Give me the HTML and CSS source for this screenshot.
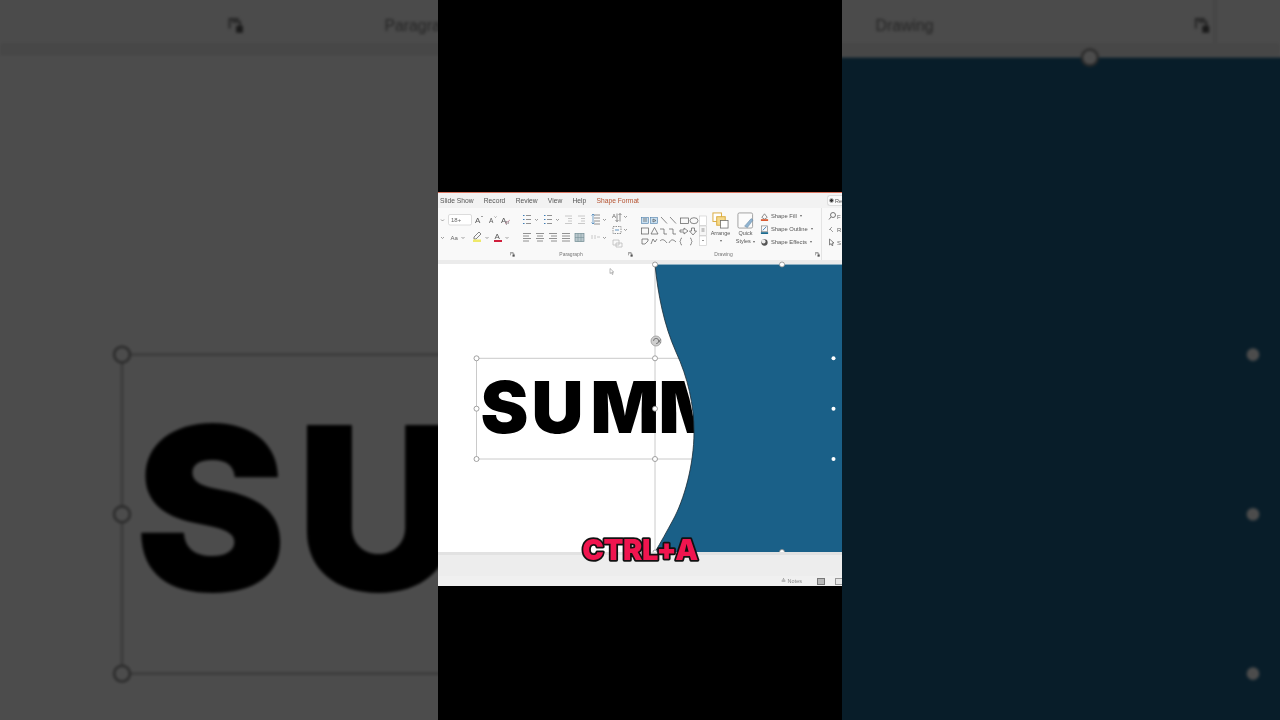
FILE: index.html
```html
<!DOCTYPE html>
<html lang="en">
<head>
<meta charset="utf-8">
<title>Shape Format</title>
<link rel="stylesheet" href="styles.css">
</head>
<body>
<svg class="defs" width="0" height="0">
  <defs>
    <symbol id="launcher" viewBox="0 0 6 6">
      <path d="M.5 4V.5H4M1.5 1.5h3v3" fill="none" stroke="#777" stroke-width=".8"/>
      <path d="M3 3h2.6v2.6H3z" fill="#555"/>
    </symbol>
    <symbol id="canvas-art" viewBox="438 264 404 288" overflow="visible">
      <g class="guides">
        <path d="M476.500 358.300H700M476.500 459H700M476.500 358.300V459M655 264V552"/>
      </g>
      <text class="big-text" x="480.500 531.500 590.500 658.500" y="433">SUMM</text>
      <path class="blue-shape" d="M655 264.500C658 295 664 325 676 352C688 378 694 405 694 432C694 465 684 500 673 520C667 531 661 542 655 552H870V264.500Z"/>
      <path class="shape-edge" d="M655 264.500C658 295 664 325 676 352C688 378 694 405 694 432C694 465 684 500 673 520C667 531 661 542 655 552"/>
      <g class="handle">
        <circle cx="476.500" cy="358.300" r="2.500"/><circle cx="655" cy="358.300" r="2.500"/>
        <circle cx="476.500" cy="408.700" r="2.500"/><circle cx="655" cy="408.700" r="2.500"/>
        <circle cx="476.500" cy="459" r="2.500"/><circle cx="655" cy="459" r="2.500"/>
        <circle cx="655" cy="264.500" r="2.500"/><circle cx="782" cy="264.500" r="2.500"/>
        <circle cx="655" cy="552" r="2"/><circle cx="782" cy="552" r="2.500"/>
      </g>
      <g class="dot">
        <circle cx="833.500" cy="358.300" r="2"/><circle cx="833.500" cy="408.700" r="2"/><circle cx="833.500" cy="459" r="2"/>
      </g>
      <g class="rotate">
        <circle cx="656" cy="341" r="5"/>
        <path d="M653.500 341a2.600 2.600 0 1 1 2.600 2.600M659 341l2-1.500M659 341l1.500 1.800"/>
      </g>
      <path class="cursor" d="M610 268.500v5l1.300-1 1 2 .8-.4-1-2h1.700z"/>
    </symbol>
  </defs>
</svg>

<div class="backdrop">
  <div class="frame frame-zoomed">
    <div class="slide">
      <div class="tabs"></div>
      <div class="ribbon">
        <div class="group group-font"><div class="group-body"></div><div class="group-foot"><svg class="launch"><use href="#launcher"/></svg></div></div>
        <div class="group group-para"><div class="group-body"></div><div class="group-foot"><span>Paragraph</span><svg class="launch"><use href="#launcher"/></svg></div></div>
        <div class="group group-draw"><div class="group-body"></div><div class="group-foot"><span>Drawing</span><svg class="launch"><use href="#launcher"/></svg></div></div>
        <div class="group group-edit"></div>
      </div>
      <div class="band"></div>
      <div class="canvas"><svg class="canvas-svg"><use href="#canvas-art"/></svg></div>
      <div class="footer"></div>
    </div>
  </div>
</div>

<div class="stage">
  <div class="frame frame-main">
    <div class="slide">
      <nav class="tabs">
        <span>Slide Show</span><span>Record</span><span>Review</span><span>View</span><span>Help</span>
        <span class="tab-active">Shape Format</span>
        <span class="rec-btn"><i></i>Re</span>
      </nav>
      <div class="ribbon">
        <div class="group group-font">
          <div class="group-body">
            <svg class="ico-block" viewBox="438 208 78 44">
              <g class="caret"><path d="M441 219.500l1.500 1.500 1.500-1.500M465.500 219l1.500 1.500 1.500-1.500M441 237l1.500 1.500 1.500-1.500M461.500 237l1.500 1.500 1.500-1.500M485.500 237l1.500 1.500 1.500-1.500M505.500 237l1.500 1.500 1.500-1.500"/></g>
              <rect x="448.500" y="214.500" width="23" height="10.500" rx="1.500" fill="#fff" stroke="#cfcfcf" stroke-width=".7"/>
              <text class="rib-t" x="451" y="222">18+</text>
              <text class="rib-a" x="475" y="223">A</text><path class="up" d="M481 217l1 -1 1 1"/>
              <text class="rib-a small" x="489" y="223">A</text><path class="up" d="M494.500 216.500l1 1 1-1"/>
              <text class="rib-a" x="501" y="223">A</text><text class="rib-t" x="506" y="224">p</text>
              <path d="M505 224l5-4" stroke="#c58aa0" stroke-width=".8"/>
              <text class="rib-t" x="450.500" y="240">Aa</text>
              <path d="M474 237l5-5 2 2-5 5h-2z" fill="none" stroke="#666" stroke-width=".8"/>
              <rect x="473" y="239.500" width="8" height="2.500" fill="#efe96a"/>
              <text class="rib-a" x="494.500" y="239" font-size="8">A</text>
              <rect x="494" y="240" width="8" height="2" fill="#d01f3c"/>
            </svg>
          </div>
          <div class="group-foot"><svg class="launch"><use href="#launcher"/></svg></div>
        </div>
        <div class="group group-para">
          <div class="group-body">
            <svg class="ico-block" viewBox="516 208 118 44">
              <g class="lines-blue">
                <path d="M523 215.500h1.500M523 219.500h1.500M523 223.500h1.500M544 215.500h1.500M544 219.500h1.500M544 223.500h1.500"/>
              </g>
              <g class="lines">
                <path d="M526 215.500h5M526 219.500h5M526 223.500h5M547 215.500h5M547 219.500h5M547 223.500h5"/>
                <path d="M523 233.500h8M523 236h6M523 238.500h8M523 241h6M536 233.500h8M537 236h6M536 238.500h8M537 241h6M549 233.500h8M551 236h6M549 238.500h8M551 241h6M562 233.500h8M562 236h8M562 238.500h8M562 241h8"/>
                <path d="M594 215h6M594 218h6M594 221h6M594 224h6"/>
              </g>
              <g class="lines-pale">
                <path d="M565 216h7M568 218.500h4M568 221h4M565 223.500h7M578 216h7M581 218.500h4M581 221h4M578 223.500h7"/>
                <path d="M592 235v4M595 235v4M597 237h3"/>
                <path d="M613 240h6v5h-6zM616 243h6v4h-6z"/>
              </g>
              <rect x="575" y="233.500" width="9" height="8" fill="#b9c7cc" stroke="#6f8a92" stroke-width=".7"/>
              <path d="M578 233.500v8M581 233.500v8M575 237.500h9" stroke="#6f8a92" stroke-width=".5"/>
              <g class="caret"><path d="M535 219l1.500 1.500 1.500-1.500M556 219l1.500 1.500 1.500-1.500M603 219l1.500 1.500 1.500-1.500M603 237l1.500 1.500 1.500-1.500M624 216l1.500 1.500 1.500-1.500M624 229l1.500 1.500 1.500-1.500"/></g>
              <path d="M591.500 215.500l1.500-1.500 1.500 1.500M591.500 222.500l1.500 1.500 1.500-1.500M593 214v10" fill="none" stroke="#3b7bb5" stroke-width=".7"/>
              <text class="rib-t" x="612" y="218" font-size="5">A</text>
              <path d="M617 213.500v8M615.500 220l1.500 1.700 1.500-1.700M620 213.500v8M618.500 215l1.500-1.500 1.500 1.500" fill="none" stroke="#666" stroke-width=".7"/>
              <rect x="613" y="226.500" width="8" height="7" fill="none" stroke="#666" stroke-width=".7" stroke-dasharray="1.500 1"/>
              <path d="M615 230h4" stroke="#3b7bb5" stroke-width=".8"/>
            </svg>
          </div>
          <div class="group-foot"><span>Paragraph</span><svg class="launch"><use href="#launcher"/></svg></div>
        </div>
        <div class="group group-draw">
          <div class="group-body draw-body">
            <svg class="gallery" viewBox="640 213 68 34">
              <g fill="#c8dff0" stroke="#4b7ea8" stroke-width=".6">
                <rect x="641.500" y="217.500" width="7" height="6"/><rect x="650.500" y="217.500" width="7" height="6"/>
              </g>
              <g fill="none" stroke="#5a5a5a" stroke-width=".7">
                <path d="M643 219h4M643 221h4M653 219l3 1.500-3 1.500z"/>
                <path d="M661 217l6 6.500M670 217l6 6.500"/>
                <rect x="680.500" y="218" width="8" height="5.500"/>
                <ellipse cx="694" cy="220.700" rx="4" ry="3"/>
                <rect x="641.500" y="228" width="7" height="6"/>
                <path d="M651 234l3.500-6.500 3.500 6.500z"/>
                <path d="M660 229h4v5h3M669 229h4v5h3"/>
                <path d="M680 230h4v-2l4 3-4 3v-2h-4z"/>
                <path d="M691.500 228h3v3h2l-3.500 4-3.500-4h2z"/>
                <path d="M642 244v-5h6v2l-3 3zM651 244l2-5 2 3 2-3M660 241c2-2 4-2 7 2M669 243c2-4 4-4 7-1"/>
                <path d="M682 238c-2 0-1 3-2 3.500 1 .5 0 3.500 2 3.500M690 238c2 0 1 3 2 3.500-1 .5 0 3.500-2 3.500"/>
              </g>
              <rect x="699.500" y="216" width="7" height="9.500" fill="#fff" stroke="#c8c8c8" stroke-width=".6"/>
              <rect x="699.500" y="226" width="7" height="9.500" fill="#f6f6f6" stroke="#c8c8c8" stroke-width=".6"/>
              <rect x="699.500" y="236" width="7" height="9.500" fill="#fff" stroke="#c8c8c8" stroke-width=".6"/>
              <path d="M701.500 229h3M701.500 231h3M702 240l1 1 1-1" stroke="#555" stroke-width=".6" fill="none"/>
            </svg>
            <div class="big-btn btn-arrange">
              <svg class="big-ico" viewBox="0 0 18 18">
                <rect x="1" y="1" width="9" height="9" fill="#fff" stroke="#d9a93a"/>
                <rect x="5" y="5" width="9" height="9" fill="#f5d98b" stroke="#d9a93a"/>
                <rect x="9" y="9" width="8" height="8" fill="#fff" stroke="#666" stroke-width=".8"/>
              </svg>
              <span>Arrange</span>
              <b class="btn-caret"></b>
            </div>
            <div class="big-btn btn-quick">
              <svg class="big-ico" viewBox="0 0 18 18">
                <rect x="1" y="1" width="15.500" height="16" rx="1.500" fill="#fbfbfb" stroke="#888" stroke-width=".8"/>
                <path d="M8 15l7-8 2 1.500-6 8z" fill="#8fb3d0" stroke="#5d7f9c" stroke-width=".5"/>
              </svg>
              <span>Quick</span>
              <span>Styles <b class="btn-caret inline"></b></span>
            </div>
            <ul class="shape-list">
              <li><svg viewBox="0 0 10 10"><path d="M2 6l3-4 3 4-3 2z" fill="none" stroke="#666" stroke-width=".8"/><rect x="1" y="8" width="8" height="2" fill="#d95b33"/></svg><span>Shape Fill</span><b class="btn-caret inline"></b></li>
              <li><svg viewBox="0 0 10 10"><rect x="1.500" y="1" width="7" height="6.500" fill="none" stroke="#777" stroke-width=".7"/><path d="M3 6l4-4" stroke="#3b7bb5"/><rect x="1" y="8" width="8" height="2" fill="#1c6a8e"/></svg><span>Shape Outline</span><b class="btn-caret inline"></b></li>
              <li><svg viewBox="0 0 10 10"><circle cx="5" cy="5" r="3.500" fill="#555"/><circle cx="4" cy="4" r="2.200" fill="#ededed"/></svg><span>Shape Effects</span><b class="btn-caret inline"></b></li>
            </ul>
          </div>
          <div class="group-foot"><span>Drawing</span><svg class="launch"><use href="#launcher"/></svg></div>
        </div>
        <div class="group group-edit">
          <svg class="ico-block" viewBox="822 208 20 44">
            <circle cx="833" cy="215" r="2.500" fill="none" stroke="#555" stroke-width=".8"/>
            <path d="M831 217l-2 2.500" stroke="#555" stroke-width=".8"/>
            <path d="M829 230l3-3M833 232l-3-3" stroke="#888" stroke-width=".8"/>
            <path d="M829.500 239v6l1.500-1.300 1 2 1-.5-1-2 2-.2z" fill="none" stroke="#555" stroke-width=".7"/>
            <text class="rib-t" x="837" y="218.500">F</text>
            <text class="rib-t" x="837" y="231.500">R</text>
            <text class="rib-t" x="837" y="244.500">S</text>
          </svg>
        </div>
      </div>
      <div class="band"></div>
      <div class="canvas"><svg class="canvas-svg"><use href="#canvas-art"/></svg></div>
      <footer class="footer">
        <div class="status">
          <span class="notes">≜ Notes</span>
          <i class="view-ico"></i>
          <i class="view-ico pale"></i>
        </div>
      </footer>
    </div>
  </div>
  <svg class="caption" viewBox="0 0 130 34"><text x="65" y="26.500">CTRL+A</text></svg>
</div>
</body>
</html>
```
FILE: styles.css
```css
* { box-sizing: border-box; }
html, body { margin: 0; height: 100%; }
body {
  width: 1280px;
  height: 720px;
  background: #000;
  overflow: hidden;
  position: relative;
  font-family: "Liberation Sans", Arial, sans-serif;
}
.defs { position: absolute; }

.backdrop, .stage {
  position: absolute;
  inset: 0;
  display: flex;
  justify-content: center;
}
.backdrop { overflow: hidden; }

.frame {
  width: 404px;
  height: 720px;
  flex: none;
  padding-top: 192px;
  background: #000;
  overflow: hidden;
}
.frame-zoomed {
  transform: scale(3.168);
  filter: blur(.5px) brightness(.3);
  overflow: visible;
}
.frame-zoomed .slide { margin: 0 -12px; padding: 0 12px; }
.frame-main { filter: blur(.45px); }

.slide {
  height: 394px;
  display: flex;
  flex-direction: column;
  background: #fff;
  border-top: 1px solid #d9745f;
}

.tabs {
  height: 15px;
  flex: none;
  display: flex;
  align-items: center;
  padding-left: 2px;
  gap: 10.300px;
  background: #f2f2f2;
  font-size: 6.700px;
  color: #555;
  position: relative;
}
.tab-active { color: #b5512f; }
.rec-btn {
  margin-left: auto;
  width: 15px;
  height: 11px;
  border: 1px solid #ddd;
  border-right: 0;
  border-radius: 3px 0 0 3px;
  background: #fafafa;
  display: flex;
  align-items: center;
  gap: 1px;
  padding-left: 1px;
  font-size: 5.500px;
}
.rec-btn i {
  width: 5px;
  height: 5px;
  flex: none;
  border-radius: 50%;
  background: #333;
  border: 1px solid #bbb;
}

.ribbon {
  height: 52px;
  flex: none;
  display: flex;
  background: #f9f9f9;
}
.group { display: flex; flex-direction: column; flex: none; }
.group-font { width: 78px; }
.group-para { width: 118px; }
.group-draw { width: 188px; border-right: 1px solid #e4e4e4; }
.group-edit { width: 20px; }
.group-body { height: 42px; flex: none; }
.group-foot {
  height: 10px;
  flex: none;
  display: flex;
  align-items: center;
  justify-content: center;
  position: relative;
  padding-bottom: 2px;
  font-size: 5px;
  color: #777;
}
.group-para .group-foot { padding-right: 8px; }
.group-draw .group-foot { padding-right: 8px; }
.launch {
  position: absolute;
  right: 1px;
  top: 2px;
  width: 5px;
  height: 5px;
}
.ico-block { display: block; width: 100%; height: 44px; }
.rib-t { font-size: 6px; fill: #666; }
.rib-a { font-size: 8px; fill: #555; }
.rib-a.small { font-size: 6.500px; }
.up { fill: none; stroke: #666; stroke-width: .6; }
.caret path { fill: none; stroke: #777; stroke-width: .7; }
.lines path { fill: none; stroke: #777; stroke-width: .8; }
.lines-blue path { fill: none; stroke: #3b7bb5; stroke-width: 1; }
.lines-pale path { fill: none; stroke: #bdbdbd; stroke-width: .8; }

.draw-body { display: flex; padding-left: 6px; }
.gallery { width: 68px; height: 34px; margin-top: 5px; flex: none; }
.big-btn {
  width: 25px;
  flex: none;
  display: flex;
  flex-direction: column;
  align-items: center;
  font-size: 5.500px;
  line-height: 8px;
  color: #555;
  padding-top: 4px;
}
.big-ico { width: 17px; height: 17px; }
.btn-caret {
  display: block;
  width: 0;
  height: 0;
  margin-top: 3px;
  border: 1.500px solid transparent;
  border-top: 2px solid #666;
}
.btn-caret.inline { display: inline-block; margin: 0 0 -1px 1px; }
.shape-list {
  list-style: none;
  margin: 0;
  padding: 3px 0 0 2px;
  display: flex;
  flex-direction: column;
  gap: 3px;
  font-size: 5.800px;
  color: #555;
}
.shape-list li { display: flex; align-items: center; gap: 2px; height: 10px; white-space: nowrap; }
.shape-list svg { width: 9px; height: 9px; flex: none; }

.band { height: 4px; flex: none; background: #ebebeb; }

.canvas { height: 288px; flex: none; background: #fff; }
.canvas-svg { display: block; width: 404px; height: 288px; overflow: visible; }
.guides path { fill: none; stroke: #c4c4c4; stroke-width: .9; }
.big-text {
  font-family: Inter, "Liberation Sans", sans-serif;
  font-weight: 900;
  font-size: 72px;
  font-optical-sizing: none;
  fill: #000;
}
.blue-shape { fill: #1a6088; }
.shape-edge { fill: none; stroke: #1c2c36; stroke-width: .8; }
.handle circle { fill: #fff; stroke: #8a8a8a; stroke-width: .8; }
.dot circle { fill: #fff; }
.rotate circle { fill: #cfcfcf; stroke: #999; stroke-width: .8; }
.rotate path { fill: none; stroke: #666; stroke-width: .8; }
.cursor { fill: #fff; stroke: #777; stroke-width: .5; }

.footer {
  height: 34px;
  flex: none;
  background: #ededed;
  border-top: 3px solid #e2e2e2;
  display: flex;
  flex-direction: column;
  justify-content: flex-end;
}
.status {
  height: 10px;
  display: flex;
  align-items: center;
  justify-content: flex-end;
  gap: 10px;
  background: #f0f0f0;
  font-size: 5.500px;
  color: #888;
  margin-right: -1px;
}
.notes { margin-right: 5px; }
.view-ico {
  width: 8px;
  height: 7px;
  background: #b8b8b8;
  border: 1px solid #777;
}
.view-ico.pale { background: #e6e6e6; border-color: #999; }

.caption {
  position: absolute;
  left: 575px;
  top: 533px;
  width: 130px;
  height: 34px;
}
.caption text {
  font-family: Inter, "Liberation Sans", sans-serif;
  font-weight: 900;
  font-size: 29px;
  text-anchor: middle;
  letter-spacing: -.4px;
  fill: #f0154f;
  stroke: #111;
  stroke-width: 3.500px;
  stroke-linejoin: round;
  paint-order: stroke fill;
}
```
